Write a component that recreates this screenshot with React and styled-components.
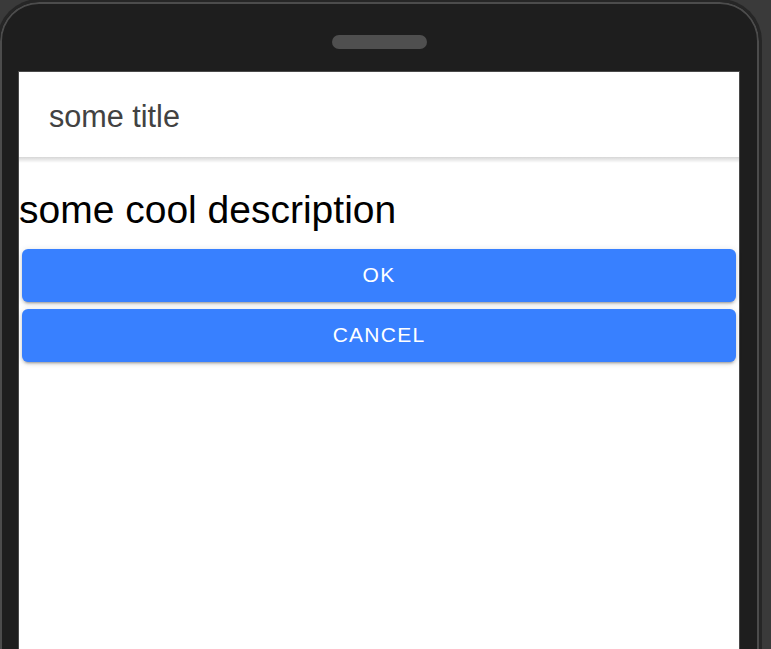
import React from "react";
import styled, { createGlobalStyle } from "styled-components";

const Global = createGlobalStyle`
  html, body {
    margin: 0;
    padding: 0;
    background: #3a3a3a;
    overflow: hidden;
    font-family: "Liberation Sans", Arial, sans-serif;
  }
  * { box-sizing: border-box; }
`;

const Stage = styled.div`
  width: 771px;
  height: 649px;
  overflow: hidden;
`;

const Phone = styled.div`
  width: 765px;
  min-height: 720px;
  margin: -1px 0 0 -3px;
  padding: 33px 19px 0 18px;
  background: #1e1e1e;
  border: 3px solid #262626;
  border-bottom: none;
  border-radius: 42px 42px 0 0;
  box-shadow: inset 0 0 0 2px #4c4c4c;
  display: flex;
  flex-direction: column;
  align-items: center;
`;

const Speaker = styled.div`
  width: 95px;
  height: 14px;
  border-radius: 7px;
  background: #4f4f4f;
  margin: 0 0 22px 1px;
`;

const Screen = styled.div`
  align-self: stretch;
  min-height: 700px;
  background: #ffffff;
  border: 1px solid #4a4a4a;
  border-bottom: none;
  display: flex;
  flex-direction: column;
`;

const Header = styled.header`
  position: relative;
  height: 85px;
  display: flex;
  align-items: center;
  padding: 4px 30px 0;
  background: #ffffff;
  &::after {
    content: "";
    position: absolute;
    left: 0;
    right: 0;
    bottom: -6px;
    height: 6px;
    background: linear-gradient(to bottom, rgba(0, 0, 0, 0.16), rgba(0, 0, 0, 0));
  }
`;

const Title = styled.div`
  font-size: 30.6px;
  color: #424242;
`;

const Content = styled.main`
  display: flex;
  flex-direction: column;
`;

const Description = styled.h1`
  margin: 30px 0 15px;
  font-size: 39px;
  font-weight: 400;
  line-height: 1.2;
  color: #000000;
`;

const Buttons = styled.div`
  display: flex;
  flex-direction: column;
  gap: 7px;
  padding: 0 3px;
`;

const Button = styled.button`
  height: 53px;
  border: none;
  border-radius: 6px;
  background: #3880ff;
  color: #ffffff;
  font-family: "Liberation Sans", Arial, sans-serif;
  font-size: 21px;
  letter-spacing: 0.06em;
  text-transform: uppercase;
  box-shadow: 0 4px 2px -3px rgba(0, 0, 0, 0.2), 0 2px 3px 0 rgba(0, 0, 0, 0.14),
    0 1px 7px 0 rgba(0, 0, 0, 0.12);
  cursor: pointer;
  padding: 0;
`;

export default function App() {
  return (
    <>
      <Global />
      <Stage>
        <Phone>
          <Speaker />
          <Screen>
            <Header>
              <Title>some title</Title>
            </Header>
            <Content>
              <Description>some cool description</Description>
              <Buttons>
                <Button>Ok</Button>
                <Button>Cancel</Button>
              </Buttons>
            </Content>
          </Screen>
        </Phone>
      </Stage>
    </>
  );
}
